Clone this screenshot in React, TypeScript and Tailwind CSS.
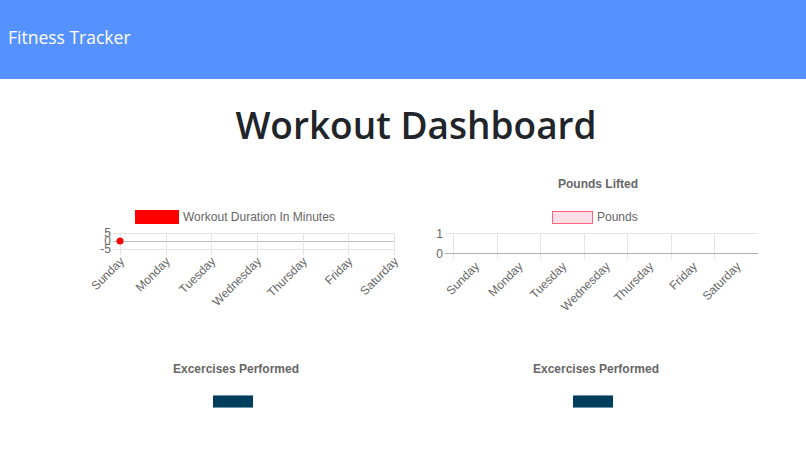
import React from 'react';

const DAYS = ['Sunday', 'Monday', 'Tuesday', 'Wednesday', 'Thursday', 'Friday', 'Saturday'];
const CHART_FONT = '"Liberation Sans", Arial, sans-serif';

// ─── Line chart: workout duration ──────────────────────────────────────────

function DurationChart() {
    // svg top = page y 160, left = page x 0
    const xs = DAYS.map((_, i) => 120 + i * 45.67);
    return (
        <svg width={403} height={175} style={{ fontFamily: CHART_FONT }}>
            <rect x={135} y={50} width={44} height={14} fill="#ff0000" />
            <text x={183} y={61} fontSize={12} fill="#666">Workout Duration In Minutes</text>

            {/* grid */}
            {[73, 89].map(y => (
                <line key={y} x1={113} x2={394} y1={y + 0.5} y2={y + 0.5} stroke="#e5e5e5" />
            ))}
            <line x1={113} x2={394} y1={81.5} y2={81.5} stroke="#bdbdbd" />
            {xs.map(x => (
                <line key={x} x1={Math.round(x) + 0.5} x2={Math.round(x) + 0.5} y1={73} y2={95} stroke="#e5e5e5" />
            ))}

            <text x={111} y={77} fontSize={12} fill="#666" textAnchor="end">5</text>
            <text x={111} y={85} fontSize={12} fill="#666" textAnchor="end">0</text>
            <text x={111} y={93} fontSize={12} fill="#666" textAnchor="end">-5</text>

            <circle cx={120} cy={81} r={3.5} fill="#ff0000" />

            {xs.map((x, i) => (
                <text
                    key={DAYS[i]}
                    x={0}
                    y={0}
                    fontSize={12}
                    fill="#666"
                    textAnchor="end"
                    transform={`translate(${x + 5} ${102}) rotate(-45)`}
                >
                    {DAYS[i]}
                </text>
            ))}
        </svg>
    );
}

// ─── Bar chart: pounds lifted ──────────────────────────────────────────────

function PoundsChart() {
    // svg top = page y 160, left = page x 403
    const ox = 403;
    const bounds = DAYS.map((_, i) => 453 + i * 43.57 - ox);
    const centers = DAYS.map((_, i) => 475 + i * 43.57 - ox);
    return (
        <svg width={403} height={175} style={{ fontFamily: CHART_FONT }}>
            <text x={598 - ox} y={28} fontSize={12} fontWeight="bold" fill="#666" textAnchor="middle">
                Pounds Lifted
            </text>
            <rect x={552.5 - ox} y={51.5} width={40} height={12} fill="rgba(255,99,132,0.2)" stroke="rgb(255,99,132)" />
            <text x={597 - ox} y={61} fontSize={12} fill="#666">Pounds</text>

            <line x1={445 - ox} x2={758 - ox} y1={73.5} y2={73.5} stroke="#e5e5e5" />
            {bounds.map(x => (
                <line key={x} x1={Math.round(x) + 0.5} x2={Math.round(x) + 0.5} y1={73} y2={99} stroke="#e5e5e5" />
            ))}
            <line x1={445 - ox} x2={758 - ox} y1={93.5} y2={93.5} stroke="#b0b0b0" />

            <text x={443 - ox} y={78} fontSize={12} fill="#666" textAnchor="end">1</text>
            <text x={443 - ox} y={98} fontSize={12} fill="#666" textAnchor="end">0</text>

            {centers.map((x, i) => (
                <text
                    key={DAYS[i]}
                    x={0}
                    y={0}
                    fontSize={12}
                    fill="#666"
                    textAnchor="end"
                    transform={`translate(${x + 5} ${107}) rotate(-45)`}
                >
                    {DAYS[i]}
                </text>
            ))}
        </svg>
    );
}

// ─── Empty pie: exercises ──────────────────────────────────────────────────

function ExercisesChart() {
    return (
        <div className="flex flex-col items-center" style={{ fontFamily: CHART_FONT }}>
            <p className="text-[12px] font-bold text-[#666] leading-[14px]">Excercises Performed</p>
            <div className="mt-[19px] mr-[6px] w-[40px] h-[13px] bg-[#003f5c] border-y border-[#6f93a6]" />
        </div>
    );
}

export default function App() {
    return (
        <div className="w-[806px] h-[468px] bg-white overflow-hidden" style={{ fontFamily: '"Open Sans", "Noto Sans", sans-serif' }}>
            {/* Navbar */}
            <nav className="h-[79px] bg-[#5592ff] flex items-center px-2 pb-[3px]">
                <span className="text-white text-[17.5px] leading-none">Fitness Tracker</span>
            </nav>

            {/* Heading */}
            <h1 className="mt-[22px] text-center text-[37px] font-semibold leading-[48px] text-[#212529] pl-[26px]">
                Workout Dashboard
            </h1>

            {/* Charts */}
            <div className="grid grid-cols-2 mt-[11px]">
                <DurationChart />
                <PoundsChart />
            </div>

            <div className="grid grid-cols-2 mt-[27px]">
                <div className="flex justify-center pl-[69px]">
                    <ExercisesChart />
                </div>
                <div className="flex justify-center pr-[17px]">
                    <ExercisesChart />
                </div>
            </div>
        </div>
    );
}
